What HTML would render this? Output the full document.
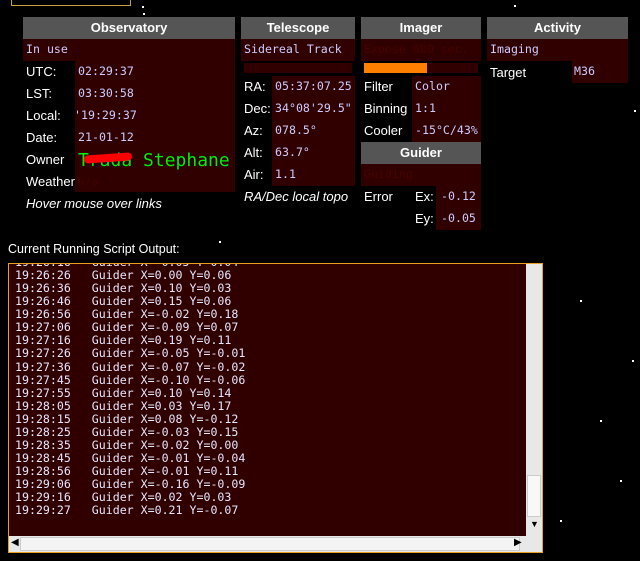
<!DOCTYPE html>
<html><head><style>
body{margin:0;width:640px;height:561px;background:#000;position:relative;overflow:hidden;font-family:"Liberation Sans",Arial,sans-serif;font-size:13px;color:#fff}
.a{position:absolute}
.h{position:absolute;background:#555;color:#fff;font-weight:bold;text-align:center;height:22px;line-height:22px;font-size:13px}
.r{position:absolute;background:#300000}
.m{font-family:"DejaVu Sans Mono","Liberation Mono",monospace;font-size:11.6px;color:#ccccff}
.l{position:absolute;line-height:22px}
.s{position:absolute;width:2px;height:2px;background:#fff}
pre{margin:0;font-family:"DejaVu Sans Mono","Liberation Mono",monospace;font-size:11.6px;line-height:13.06px;color:#e6e6ff}
</style></head><body>
<div class="a" style="left:11px;top:-6px;width:118px;height:10px;border:1px solid #c8a040"></div>
<div class="s" style="left:142px;top:6px"></div><div class="s" style="left:143px;top:13px"></div>
<div class="s" style="left:514px;top:5px"></div><div class="s" style="left:634px;top:110px"></div>
<div class="s" style="left:219px;top:241px"></div><div class="s" style="left:580px;top:300px"></div>
<div class="s" style="left:600px;top:420px"></div><div class="s" style="left:632px;top:360px"></div>
<div class="s" style="left:560px;top:520px"></div><div class="s" style="left:620px;top:480px"></div>

<!-- Observatory -->
<div class="h" style="left:23px;top:17px;width:212px">Observatory</div>
<div class="r m" style="left:23px;top:39px;width:209px;height:22px;line-height:20px;padding-left:3px">In use</div>
<div class="r" style="left:75px;top:61px;width:160px;height:131px"></div>
<div class="l" style="left:26px;top:61px">UTC:</div><div class="l m" style="left:78px;top:60px">02:29:37</div>
<div class="l" style="left:26px;top:83px">LST:</div><div class="l m" style="left:78px;top:82px">03:30:58</div>
<div class="l" style="left:26px;top:105px">Local:</div><div class="l m" style="left:74px;top:104px">'19:29:37</div>
<div class="l" style="left:26px;top:127px">Date:</div><div class="l m" style="left:78px;top:126px">21-01-12</div>
<div class="l" style="left:26px;top:149px">Owner</div><div class="l m" style="left:78px;top:150px;font-size:18px;color:#00ee00">Trada Stephane</div>
<div class="a" style="left:84px;top:154px;width:48px;height:8px;background:#f00;border-radius:4px;transform:rotate(-4deg)"></div>
<div class="l" style="left:26px;top:171px">Weather</div><div class="l m" style="left:78px;top:170px;color:#400000">n/a</div>
<div class="l" style="left:26px;top:193px;font-style:italic">Hover mouse over links</div>

<!-- Telescope -->
<div class="h" style="left:241px;top:17px;width:114px">Telescope</div>
<div class="r m" style="left:241px;top:39px;width:111px;height:22px;line-height:20px;padding-left:3px">Sidereal Track</div>
<div class="r" style="left:244px;top:63px;width:108px;height:10px"></div>
<div class="r" style="left:272px;top:76px;width:83px;height:110px"></div>
<div class="l" style="left:244px;top:76px">RA:</div><div class="l m" style="left:275px;top:75px">05:37:07.25</div>
<div class="l" style="left:244px;top:98px">Dec:</div><div class="l m" style="left:275px;top:97px">34°08'29.5"</div>
<div class="l" style="left:244px;top:120px">Az:</div><div class="l m" style="left:275px;top:119px">078.5°</div>
<div class="l" style="left:244px;top:142px">Alt:</div><div class="l m" style="left:275px;top:141px">63.7°</div>
<div class="l" style="left:244px;top:164px">Air:</div><div class="l m" style="left:275px;top:163px">1.1</div>
<div class="l" style="left:244px;top:186px;font-style:italic">RA/Dec local topo</div>

<!-- Imager -->
<div class="h" style="left:361px;top:17px;width:120px">Imager</div>
<div class="r m" style="left:361px;top:39px;width:117px;height:22px;line-height:20px;padding-left:3px;color:#480000">Expose 600 sec.</div>
<div class="r" style="left:364px;top:63px;width:114px;height:10px"></div>
<div class="a" style="left:364px;top:63px;width:63px;height:10px;background:#ff8000"></div>
<div class="r" style="left:412px;top:76px;width:69px;height:66px"></div>
<div class="l" style="left:364px;top:76px">Filter</div><div class="l m" style="left:415px;top:75px">Color</div>
<div class="l" style="left:364px;top:98px">Binning</div><div class="l m" style="left:415px;top:97px">1:1</div>
<div class="l" style="left:364px;top:120px">Cooler</div><div class="l m" style="left:415px;top:119px">-15°C/43%</div>
<div class="h" style="left:361px;top:142px;width:120px">Guider</div>
<div class="r m" style="left:361px;top:164px;width:117px;height:22px;line-height:20px;padding-left:3px;color:#480000">Guiding</div>
<div class="r" style="left:436px;top:186px;width:45px;height:44px"></div>
<div class="l" style="left:364px;top:186px">Error</div>
<div class="l" style="left:415px;top:186px">Ex:</div><div class="l m" style="left:441px;top:185px">-0.12</div>
<div class="l" style="left:415px;top:208px">Ey:</div><div class="l m" style="left:441px;top:207px">-0.05</div>

<!-- Activity -->
<div class="h" style="left:487px;top:17px;width:141px">Activity</div>
<div class="r m" style="left:487px;top:39px;width:138px;height:22px;line-height:20px;padding-left:3px">Imaging</div>
<div class="r" style="left:572px;top:61px;width:56px;height:22px"></div>
<div class="l" style="left:490px;top:62px">Target</div><div class="l m" style="left:574px;top:60px">M36</div>

<!-- Script -->
<div class="a" style="left:8px;top:242px;font-size:12.5px">Current Running Script Output:</div>
<div class="a" style="left:8px;top:263px;width:533px;height:288px;border:1px solid #e8a020;background:#300000;overflow:hidden">
<pre style="position:absolute;left:6px;top:-8px">19:26:16   Guider X=-0.05 Y=0.04
19:26:26   Guider X=0.00 Y=0.06
19:26:36   Guider X=0.10 Y=0.03
19:26:46   Guider X=0.15 Y=0.06
19:26:56   Guider X=-0.02 Y=0.18
19:27:06   Guider X=-0.09 Y=0.07
19:27:16   Guider X=0.19 Y=0.11
19:27:26   Guider X=-0.05 Y=-0.01
19:27:36   Guider X=-0.07 Y=-0.02
19:27:45   Guider X=-0.10 Y=-0.06
19:27:55   Guider X=0.10 Y=0.14
19:28:05   Guider X=0.03 Y=0.17
19:28:15   Guider X=0.08 Y=-0.12
19:28:25   Guider X=-0.03 Y=0.15
19:28:35   Guider X=-0.02 Y=0.00
19:28:45   Guider X=-0.01 Y=-0.04
19:28:56   Guider X=-0.01 Y=0.11
19:29:06   Guider X=-0.16 Y=-0.09
19:29:16   Guider X=0.02 Y=0.03
19:29:27   Guider X=0.21 Y=-0.07</pre>
<div class="a" style="left:517px;top:0;width:16px;height:272px;background:#e8e8e8"></div>
<div class="a" style="left:518px;top:211px;width:14px;height:42px;background:#f8f8f8;border:1px solid #ccc;box-sizing:border-box"></div>
<div class="a" style="left:521px;top:255px;color:#000;font-size:9px">▼</div>
<div class="a" style="left:0;top:272px;width:533px;height:16px;background:#e8e8e8"></div>
<div class="a" style="left:11px;top:273px;width:500px;height:14px;background:#f4f4f4;border:1px solid #ccc;box-sizing:border-box"></div>
<div class="a" style="left:2px;top:273px;color:#000;font-size:10px">◀</div>
<div class="a" style="left:505px;top:273px;color:#000;font-size:10px">▶</div>
</div>
</body></html>
